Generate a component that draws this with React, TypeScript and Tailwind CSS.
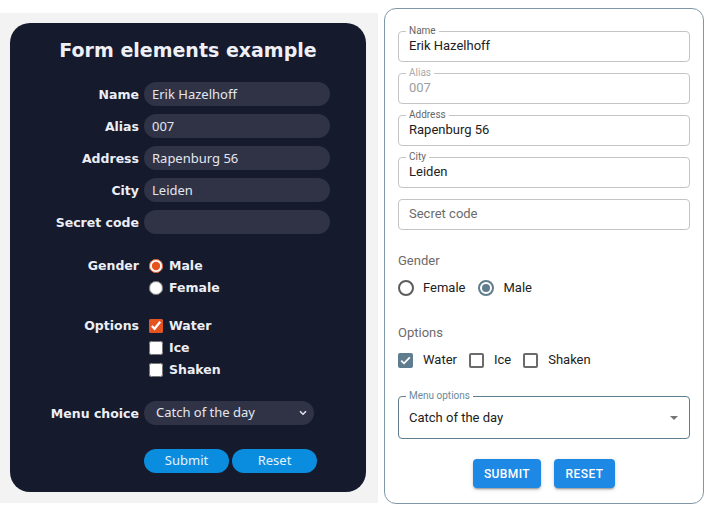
import React from "react";

const dv = "font-['DejaVu_Sans',sans-serif]";
const ns = "font-['Noto_Sans',sans-serif]";

function DarkRow({ label, children }: { label: string; children: React.ReactNode }) {
  return (
    <div className="flex items-center h-[24px]">
      <div className={`w-[129px] pt-[2px] text-right text-[12.5px] font-bold text-[#eceef5] ${dv}`}>{label}</div>
      <div className="ml-[5px]">{children}</div>
    </div>
  );
}

function DarkInput({ value }: { value: string }) {
  return (
    <input
      readOnly
      defaultValue={value}
      className={`block w-[186px] h-[24px] rounded-full bg-[#303346] px-[8px] text-[13px] text-[#e4e6ee] outline-none ${ns}`}
    />
  );
}

function DarkChoice({ type, checked, label }: { type: "radio" | "checkbox"; checked?: boolean; label: string }) {
  return (
    <label className="flex items-center h-[22px]">
      <input
        type={type}
        readOnly
        defaultChecked={checked}
        name={type === "radio" ? "g1" : undefined}
        className="m-0 ml-[5px] w-[14px] h-[14px] accent-[#e5531f]"
      />
      <span className={`ml-[6px] pt-[1px] text-[12.5px] font-bold text-[#eceef5] ${dv}`}>{label}</span>
    </label>
  );
}

function OField({ label, value, disabled, placeholder }: { label?: string; value?: string; disabled?: boolean; placeholder?: string }) {
  return (
    <div className="relative h-[31px] rounded-[4px] border border-[#c4c4c4] flex items-center pl-[10px] pb-[2px]">
      {label && (
        <span
          className={`absolute left-[7px] top-[-7px] px-[3px] bg-white text-[10px] leading-[12px] ${
            disabled ? "text-[#aaaaaa]" : "text-[#666666]"
          }`}
        >
          {label}
        </span>
      )}
      {value && <span className={`text-[13px] ${disabled ? "text-[#9e9e9e]" : "text-[#212121]"}`}>{value}</span>}
      {placeholder && <span className="text-[13px] text-[#6b6b6b]">{placeholder}</span>}
    </div>
  );
}

function MRadio({ checked, label }: { checked?: boolean; label: string }) {
  return (
    <div className="flex items-center h-[20px]">
      <div
        className={`w-[16px] h-[16px] rounded-full border-2 flex items-center justify-center ${
          checked ? "border-[#5f7d8e]" : "border-[#5c5c5c]"
        }`}
      >
        {checked && <div className="w-[8px] h-[8px] rounded-full bg-[#5f7d8e]" />}
      </div>
      <span className="ml-[9px] text-[13px] text-[#212121]">{label}</span>
    </div>
  );
}

function MCheck({ checked, label }: { checked?: boolean; label: string }) {
  return (
    <div className="flex items-center h-[20px]">
      {checked ? (
        <div className="w-[15px] h-[15px] rounded-[2px] bg-[#5f7d8e] flex items-center justify-center">
          <svg width="11" height="9" viewBox="0 0 11 9">
            <path d="M1.2 4.6 L4 7.3 L9.8 1.4" fill="none" stroke="white" strokeWidth="1.7" />
          </svg>
        </div>
      ) : (
        <div className="w-[15px] h-[15px] rounded-[2px] border-2 border-[#6b6b6b]" />
      )}
      <span className="ml-[10px] text-[13px] text-[#212121]">{label}</span>
    </div>
  );
}

export default function App() {
  return (
    <div className="flex items-start w-[715px] h-[514px] bg-white">
      {/* Left */}
      <div className="mt-[13px] w-[378px] h-[490px] bg-[#f3f3f3] pl-[10px] pt-[10px]">
        <div className="w-[356px] h-[469px] rounded-[20px] bg-[#161a2d] pt-[13px]">
          <h1 className={`text-center text-[19px] leading-[28px] font-bold text-[#eef0f6] ${dv}`}>
            Form elements example
          </h1>
          <div className="mt-[18px] flex flex-col gap-[8px]">
            <DarkRow label="Name">
              <DarkInput value="Erik Hazelhoff" />
            </DarkRow>
            <DarkRow label="Alias">
              <DarkInput value="007" />
            </DarkRow>
            <DarkRow label="Address">
              <DarkInput value="Rapenburg 56" />
            </DarkRow>
            <DarkRow label="City">
              <DarkInput value="Leiden" />
            </DarkRow>
            <DarkRow label="Secret code">
              <DarkInput value="" />
            </DarkRow>
          </div>

          <div className="mt-[21px] flex items-start">
            <div className={`w-[129px] h-[22px] leading-[22px] text-right text-[12.5px] font-bold text-[#eceef5] ${dv}`}>
              Gender
            </div>
            <div className="ml-[5px] flex flex-col">
              <DarkChoice type="radio" checked label="Male" />
              <DarkChoice type="radio" label="Female" />
            </div>
          </div>

          <div className="mt-[16px] flex items-start">
            <div className={`w-[129px] h-[22px] leading-[22px] text-right text-[12.5px] font-bold text-[#eceef5] ${dv}`}>
              Options
            </div>
            <div className="ml-[5px] flex flex-col">
              <DarkChoice type="checkbox" checked label="Water" />
              <DarkChoice type="checkbox" label="Ice" />
              <DarkChoice type="checkbox" label="Shaken" />
            </div>
          </div>

          <div className="mt-[20px]">
            <DarkRow label="Menu choice">
              <div className={`w-[170px] h-[24px] rounded-full bg-[#303346] pl-[12px] pr-[7px] flex items-center justify-between text-[13px] text-[#e4e6ee] ${ns}`}>
                <span>Catch of the day</span>
                <svg width="8" height="6" viewBox="0 0 8 6">
                  <path d="M1 1.2 L4 4.2 L7 1.2" fill="none" stroke="#e4e6ee" strokeWidth="1.5" />
                </svg>
              </div>
            </DarkRow>
          </div>

          <div className="mt-[24px] ml-[134px] flex gap-[3px]">
            <button className={`w-[85px] h-[24px] rounded-full bg-[#0b8ddf] text-[13px] text-[#e3f1fb] ${ns}`}>Submit</button>
            <button className={`w-[85px] h-[24px] rounded-full bg-[#0b8ddf] text-[13px] text-[#e3f1fb] ${ns}`}>Reset</button>
          </div>
        </div>
      </div>

      {/* Right */}
      <div className="ml-[6px] mt-[8px] w-[320px] h-[496px] border border-[#7f98a5] rounded-[12px] px-[13px] pt-[22px] font-['Roboto',sans-serif]">
        <div className="flex flex-col gap-[11px]">
          <OField label="Name" value="Erik Hazelhoff" />
          <OField label="Alias" value="007" disabled />
          <OField label="Address" value="Rapenburg 56" />
          <OField label="City" value="Leiden" />
          <OField placeholder="Secret code" />
        </div>

        <div className="mt-[21px] h-[20px] leading-[20px] text-[13px] text-[#6e6a6a]">Gender</div>
        <div className="mt-[7px] flex items-center gap-[13px]">
          <MRadio label="Female" />
          <MRadio checked label="Male" />
        </div>

        <div className="mt-[25px] h-[20px] leading-[20px] text-[13px] text-[#6e6a6a]">Options</div>
        <div className="mt-[7px] flex items-center gap-[12px]">
          <MCheck checked label="Water" />
          <MCheck label="Ice" />
          <MCheck label="Shaken" />
        </div>

        <div className="mt-[26px] relative h-[43px] rounded-[4px] border border-[#5f7d8e] flex items-center justify-between pl-[10px] pr-[11px]">
          <span className="absolute left-[7px] top-[-7px] px-[3px] bg-white text-[10px] leading-[12px] text-[#6a8a9b]">
            Menu options
          </span>
          <span className="text-[13px] text-[#212121]">Catch of the day</span>
          <svg width="8" height="4" viewBox="0 0 8 4">
            <polygon points="0,0 8,0 4,4" fill="#757575" />
          </svg>
        </div>

        <div className="mt-[20px] flex justify-center gap-[13px]">
          <button className="w-[68px] h-[29px] rounded-[4px] bg-[#1e88e5] text-white text-[12px] font-medium tracking-[0.4px] shadow-[0_3px_1px_-2px_rgba(0,0,0,0.2),0_2px_2px_0_rgba(0,0,0,0.14),0_1px_5px_0_rgba(0,0,0,0.12)]">
            SUBMIT
          </button>
          <button className="w-[61px] h-[29px] rounded-[4px] bg-[#1e88e5] text-white text-[12px] font-medium tracking-[0.4px] shadow-[0_3px_1px_-2px_rgba(0,0,0,0.2),0_2px_2px_0_rgba(0,0,0,0.14),0_1px_5px_0_rgba(0,0,0,0.12)]">
            RESET
          </button>
        </div>
      </div>
    </div>
  );
}
